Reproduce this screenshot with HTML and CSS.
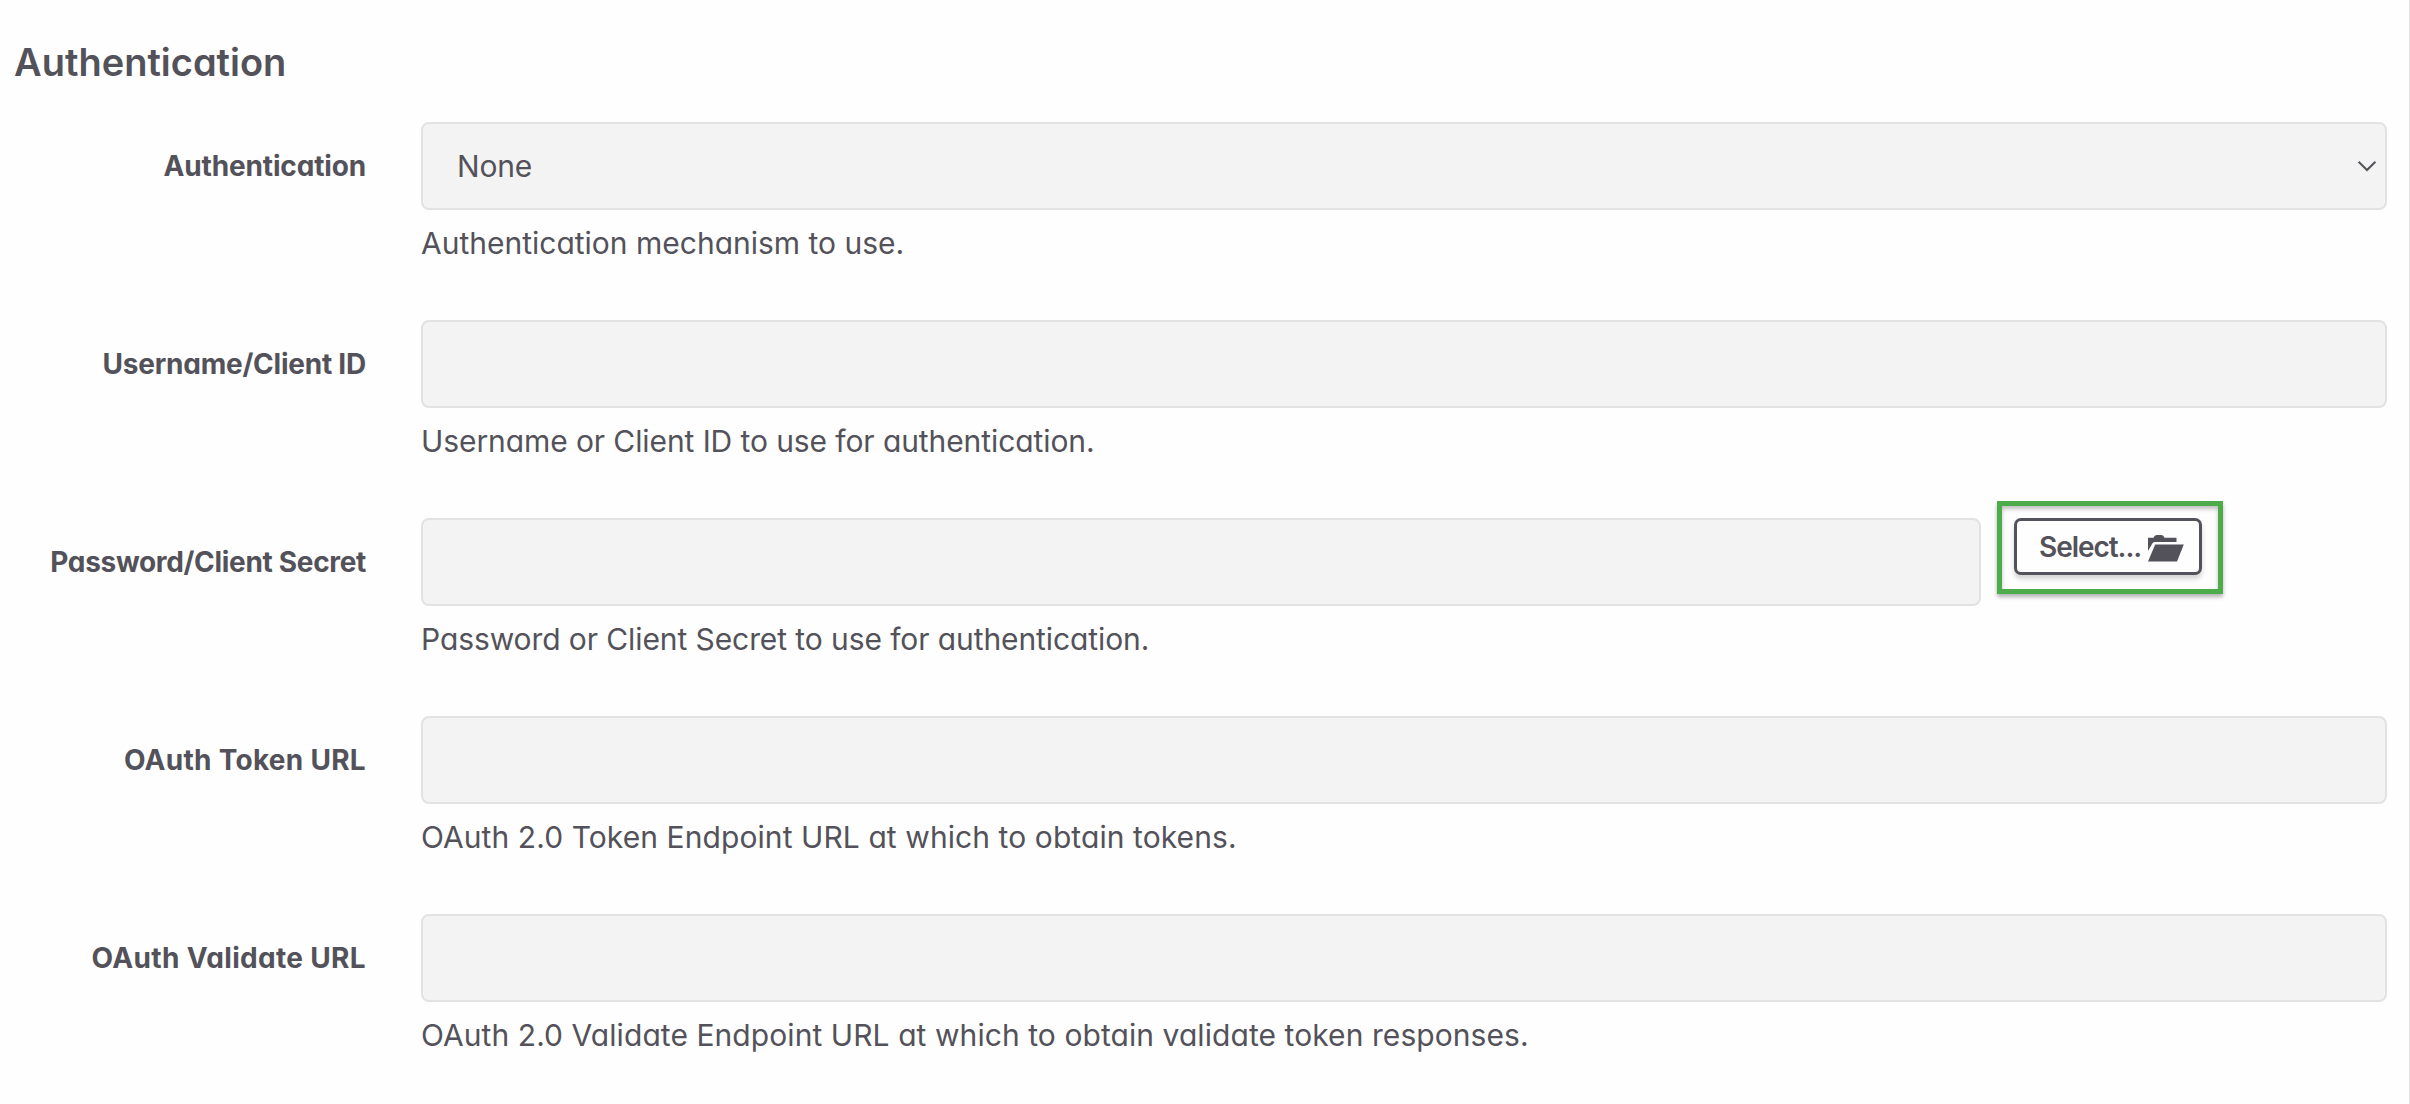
FILE: index.html
```html
<!DOCTYPE html>
<html lang="en">
<head>
<meta charset="utf-8">
<title>Authentication</title>
<link rel="stylesheet" href="styles.css">
</head>
<body>
<main class="panel">
  <h2 class="title">Authentication</h2>
  <form class="form">
    <div class="row">
      <div class="label label-auth">Authentication</div>
      <div class="field">
        <div class="control select"><span class="value">None</span>
          <svg class="chevron" width="20" height="12" viewBox="0 0 20 12"><path d="M1.6 1.8 10 10 18.4 1.8" fill="none" stroke="#53525a" stroke-width="2"/></svg>
        </div>
        <div class="help help-auth">Authentication mechanism to use.</div>
      </div>
    </div>
    <div class="row">
      <div class="label label-user">Username/Client ID</div>
      <div class="field">
        <div class="control"></div>
        <div class="help help-user">Username or Client ID to use for authentication.</div>
      </div>
    </div>
    <div class="row">
      <div class="label label-pass">Password/Client Secret</div>
      <div class="field">
        <div class="group">
          <div class="control short"></div>
          <div class="highlight">
            <div class="button"><span class="button-text">Select...</span>
              <svg class="folder" width="36" height="27" viewBox="0 0 36 27"><path d="M0 16V2.8H5.5Q6.3 0 8.8 0h4.6Q15.6 0 16.5 2.8H28.5V7H6.5Q5 7 4.3 8.5Z" fill="#53525a"/><path d="M7.2 9.5H35.8L29 26.5H0Z" fill="#53525a"/></svg>
            </div>
          </div>
        </div>
        <div class="help help-pass">Password or Client Secret to use for authentication.</div>
      </div>
    </div>
    <div class="row">
      <div class="label label-token">OAuth Token URL</div>
      <div class="field">
        <div class="control"></div>
        <div class="help help-token">OAuth 2.0 Token Endpoint URL at which to obtain tokens.</div>
      </div>
    </div>
    <div class="row">
      <div class="label label-valid">OAuth Validate URL</div>
      <div class="field">
        <div class="control"></div>
        <div class="help help-valid">OAuth 2.0 Validate Endpoint URL at which to obtain validate token responses.</div>
      </div>
    </div>
  </form>
</main>
</body>
</html>
```
FILE: styles.css
```css
* { box-sizing: border-box; }
body {
  margin: 0;
  background: #fefefe;
  color: #53525a;
  font-family: Inter, "Liberation Sans", sans-serif;
  font-feature-settings: "cv11";
}
.panel {
  height: 1104px;
  padding: 38px 22px 0 14px;
  border-right: 1px solid #e2e2e2;
  overflow: hidden;
}
.title {
  margin: 0 0 36px;
  font-size: 38px;
  line-height: 48px;
  font-weight: 600;
}
.form { display: flex; flex-direction: column; }
.row {
  display: grid;
  grid-template-columns: 352px 1fr;
  column-gap: 55px;
  height: 198px;
}
.label {
  height: 88px;
  line-height: 88px;
  text-align: right;
  font-size: 28px;
  font-weight: 700;
  white-space: nowrap;
}
.label-auth { letter-spacing: -0.15px; }
.label-user { letter-spacing: -0.23px; }
.label-pass { letter-spacing: -0.32px; }
.label-token { letter-spacing: 0.28px; }
.label-valid { letter-spacing: 0.33px; }
.control {
  display: flex;
  align-items: center;
  justify-content: space-between;
  width: 1966px;
  height: 88px;
  padding: 0 8px 0 34px;
  border: 2px solid #e2e2e2;
  border-radius: 8px;
  background: #f3f3f3;
}
.value { font-size: 30px; letter-spacing: -0.2px; }
.group { display: flex; height: 88px; }
.short { width: 1560px; }
.highlight {
  width: 226px;
  height: 93px;
  margin: -17px 0 0 16px;
  padding: 12px;
  border: 5px solid #4eab4a;
  box-shadow: 0 3px 4px rgba(0, 0, 0, .3), inset 0 3px 4px rgba(0, 0, 0, .25);
}
.button {
  display: flex;
  align-items: center;
  width: 188px;
  height: 57px;
  padding-left: 22px;
  border: 3px solid #53525a;
  border-radius: 7px;
  background: #fefefe;
  box-shadow: 0 4px 5px rgba(0, 0, 0, .17);
}
.button-text {
  width: 109px;
  font-size: 28px;
  font-weight: 600;
  letter-spacing: -1.05px;
  white-space: nowrap;
}
.folder { margin-top: 4px; }
.help {
  margin-top: 14px;
  font-size: 30px;
  line-height: 38px;
  white-space: nowrap;
}
.help-user { letter-spacing: -0.09px; }
.help-pass { letter-spacing: -0.09px; }
.help-token { letter-spacing: 0.08px; }
.help-valid { letter-spacing: 0.07px; }
```
